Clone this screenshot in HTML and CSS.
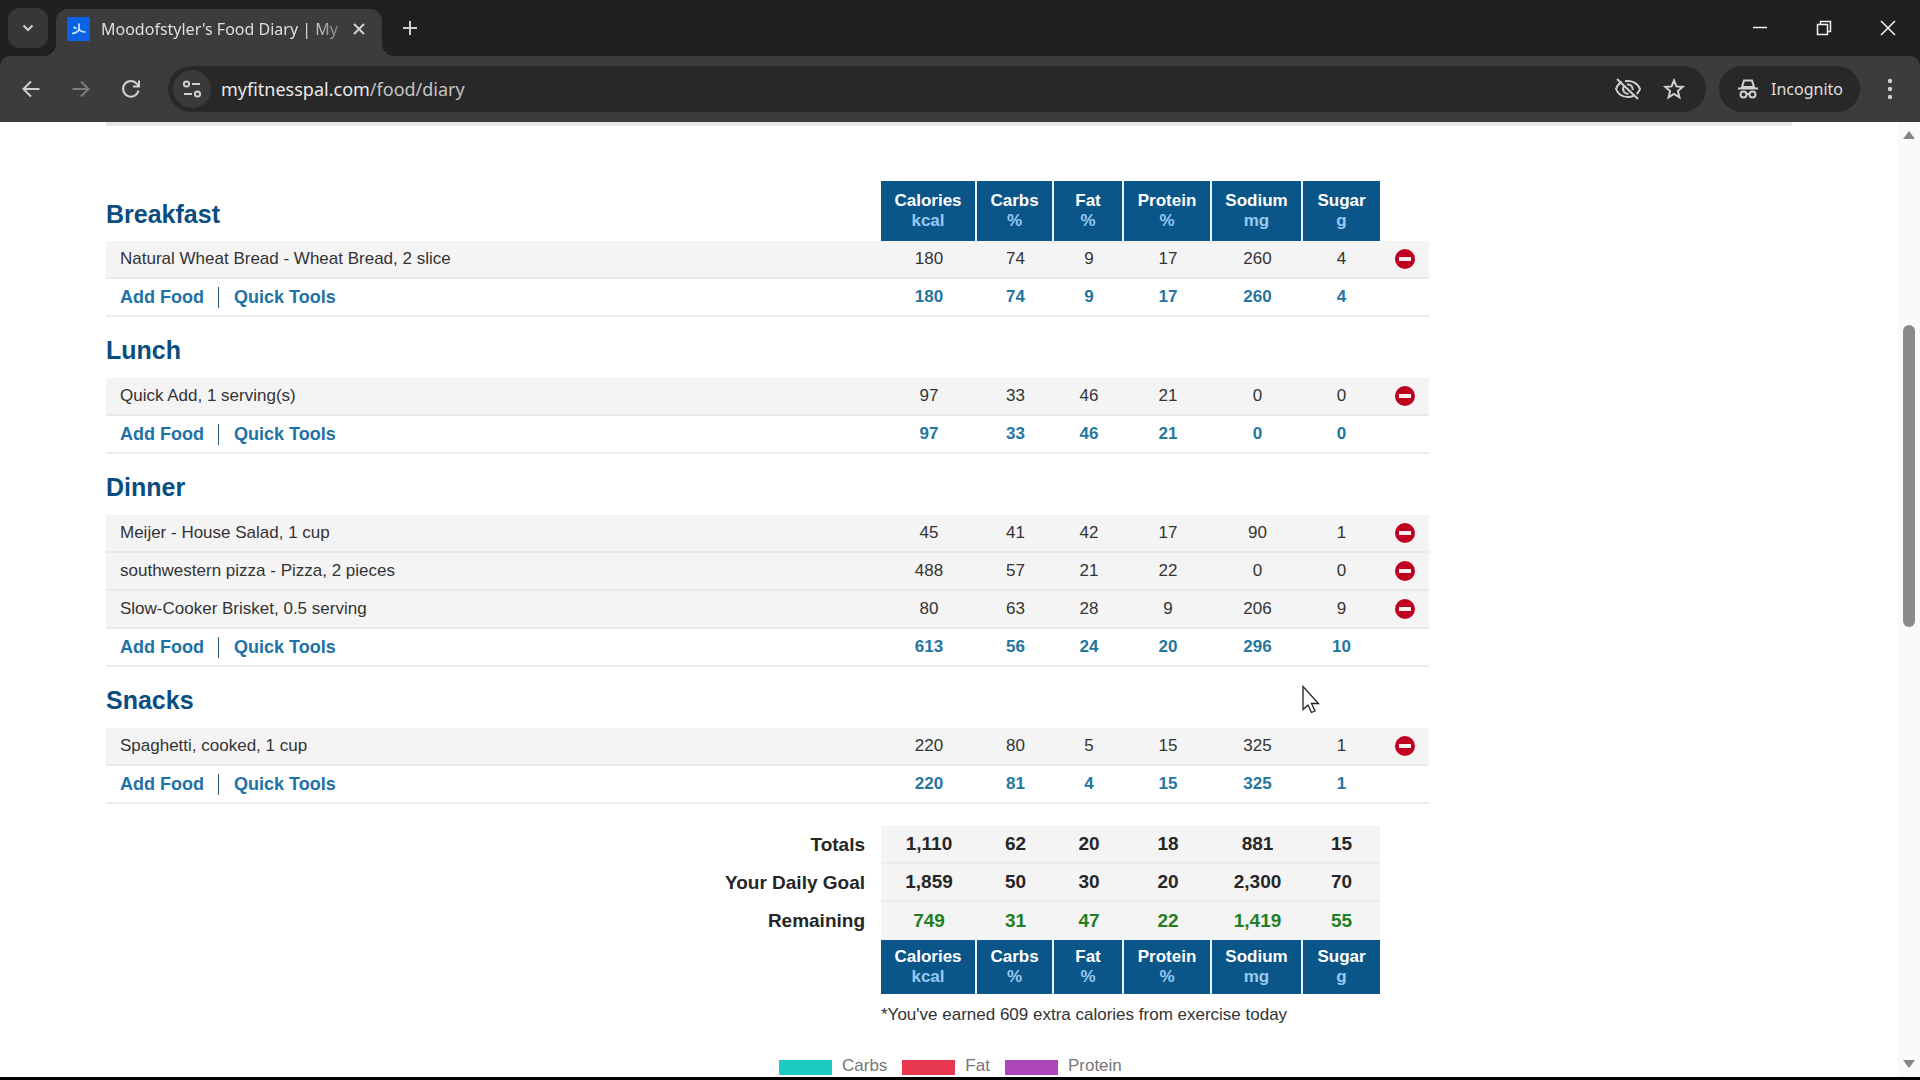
FILE: index.html
```html
<!DOCTYPE html>
<html lang="en">
<head>
<meta charset="utf-8">
<title>Moodofstyler's Food Diary | MyFitnessPal</title>
<link rel="stylesheet" href="styles.css">
</head>
<body>
<header class="browser">
  <div class="tabstrip">
    <button class="tab-search" aria-label="Search tabs"><svg width="14" height="14" viewBox="0 0 14 14"><path d="M2.500 4.500 7 9l4.500-4.500"/></svg></button>
    <div class="tab">
      <svg class="favicon" width="23" height="24" viewBox="0 0 23 24"><rect width="23" height="24" fill="#0b61e4"/><path d="M12 6.500v6M12 12.500q-2 3.500-7 4M12 12.500q2 2.500 6.500 2.500M6.500 10l3 1.500" fill="none" stroke="#c9e6ff" stroke-width="1.700"/></svg>
      <span class="tab-title">Moodofstyler's Food Diary | My</span>
      <button class="tab-close" aria-label="Close tab"><svg width="14" height="14" viewBox="0 0 14 14"><path d="m2 2 10 10M12 2 2 12"/></svg></button>
    </div>
    <button class="new-tab" aria-label="New tab"><svg width="16" height="16" viewBox="0 0 16 16"><path d="M8 1v14M1 8h14"/></svg></button>
    <div class="window-controls">
      <button aria-label="Minimize"><svg width="16" height="16" viewBox="0 0 16 16"><path d="M1 7.500h14"/></svg></button>
      <button aria-label="Restore"><svg width="16" height="16" viewBox="0 0 16 16"><path d="M1.500 4.500h10v10h-10zM4.500 4.500v-3h10v10h-3"/></svg></button>
      <button aria-label="Close"><svg width="16" height="16" viewBox="0 0 16 16"><path d="m1 1 14 14M15 1 1 15"/></svg></button>
    </div>
  </div>
  <div class="toolbar">
    <nav class="nav">
      <button aria-label="Back"><svg width="20" height="20" viewBox="0 0 20 20"><path d="M18.500 10H3M10 2.500 2.500 10l7.500 7.500"/></svg></button>
      <button class="dim" aria-label="Forward"><svg width="20" height="20" viewBox="0 0 20 20"><path d="M1.500 10H17M10 2.500l7.500 7.500-7.500 7.500"/></svg></button>
      <button aria-label="Reload"><svg width="20" height="20" viewBox="0 0 20 20"><path d="M17.500 11.500A7.800 7.800 0 1 1 16 5l1.500 2M18 1.500v6h-6"/></svg></button>
    </nav>
    <div class="omnibox">
      <button class="site-info" aria-label="Site information"><svg width="20" height="20" viewBox="0 0 20 20"><circle cx="4.500" cy="5" r="2.600"/><path d="M10 5h8M2 15h8"/><circle cx="15.500" cy="15" r="2.600"/></svg></button>
      <div class="address"><span class="host">myfitnesspal.com</span>/food/diary</div>
      <button aria-label="Third-party cookies blocked"><svg width="28" height="24" viewBox="0 0 28 24"><path d="M8 5C5 6.500 3 9 2 12c2 5 6.500 8 12 8 2 0 4-.4 5.500-1.200M11 4.300c7-1.300 13 2.200 15 7.700-.7 2-1.800 3.600-3.300 5M9.500 9.500c-1.500 4 1 7.500 5 7.200M13 7.500c3.500-.5 6 2 5.700 5.500M3 2l21 20"/></svg></button>
      <button aria-label="Bookmark this page"><svg width="24" height="24" viewBox="0 0 24 24"><path d="m12 3.500 2.400 5.900 6.300.5-4.800 4.200 1.500 6.200-5.400-3.300-5.400 3.300 1.500-6.200-4.800-4.200 6.300-.5z"/></svg></button>
    </div>
    <button class="incognito"><svg width="22" height="20" viewBox="0 0 22 20"><path d="M5 8 7 1.500h8L17 8z" fill="none"/><path d="M1 9.500h20"/><circle cx="6.500" cy="15.500" r="3"/><circle cx="15.500" cy="15.500" r="3"/><path d="M9.500 15h3"/></svg>Incognito</button>
    <button class="menu" aria-label="Menu"><svg width="6" height="22" viewBox="0 0 6 22"><circle cx="3" cy="3" r="2.200"/><circle cx="3" cy="11" r="2.200"/><circle cx="3" cy="19" r="2.200"/></svg></button>
  </div>
</header>

<div class="viewport">
  <main class="page">
    <div class="panel-edge"></div>
    <table class="diary">
      <colgroup><col><col class="c-cal"><col class="c-carb"><col class="c-fat"><col class="c-pro"><col class="c-sod"><col class="c-sug"><col class="c-del"></colgroup>
      <tbody>
        <tr class="meal"><th scope="row">Breakfast</th><th class="unit">Calories<span>kcal</span></th><th class="unit">Carbs<span>%</span></th><th class="unit">Fat<span>%</span></th><th class="unit">Protein<span>%</span></th><th class="unit">Sodium<span>mg</span></th><th class="unit">Sugar<span>g</span></th><td></td></tr>
        <tr class="food"><td>Natural Wheat Bread - Wheat Bread, 2 slice</td><td>180</td><td>74</td><td>9</td><td>17</td><td>260</td><td>4</td><td><button class="delete" aria-label="Remove"></button></td></tr>
        <tr class="sum"><td><div class="actions"><a href="#">Add Food</a><a href="#">Quick Tools</a></div></td><td>180</td><td>74</td><td>9</td><td>17</td><td>260</td><td>4</td><td></td></tr>
      </tbody>
      <tbody>
        <tr class="meal"><th scope="row" colspan="8">Lunch</th></tr>
        <tr class="food"><td>Quick Add, 1 serving(s)</td><td>97</td><td>33</td><td>46</td><td>21</td><td>0</td><td>0</td><td><button class="delete" aria-label="Remove"></button></td></tr>
        <tr class="sum"><td><div class="actions"><a href="#">Add Food</a><a href="#">Quick Tools</a></div></td><td>97</td><td>33</td><td>46</td><td>21</td><td>0</td><td>0</td><td></td></tr>
      </tbody>
      <tbody>
        <tr class="meal"><th scope="row" colspan="8">Dinner</th></tr>
        <tr class="food"><td>Meijer - House Salad, 1 cup</td><td>45</td><td>41</td><td>42</td><td>17</td><td>90</td><td>1</td><td><button class="delete" aria-label="Remove"></button></td></tr>
        <tr class="food"><td>southwestern pizza - Pizza, 2 pieces</td><td>488</td><td>57</td><td>21</td><td>22</td><td>0</td><td>0</td><td><button class="delete" aria-label="Remove"></button></td></tr>
        <tr class="food"><td>Slow-Cooker Brisket, 0.5 serving</td><td>80</td><td>63</td><td>28</td><td>9</td><td>206</td><td>9</td><td><button class="delete" aria-label="Remove"></button></td></tr>
        <tr class="sum"><td><div class="actions"><a href="#">Add Food</a><a href="#">Quick Tools</a></div></td><td>613</td><td>56</td><td>24</td><td>20</td><td>296</td><td>10</td><td></td></tr>
      </tbody>
      <tbody>
        <tr class="meal"><th scope="row" colspan="8">Snacks</th></tr>
        <tr class="food"><td>Spaghetti, cooked, 1 cup</td><td>220</td><td>80</td><td>5</td><td>15</td><td>325</td><td>1</td><td><button class="delete" aria-label="Remove"></button></td></tr>
        <tr class="sum"><td><div class="actions"><a href="#">Add Food</a><a href="#">Quick Tools</a></div></td><td>220</td><td>81</td><td>4</td><td>15</td><td>325</td><td>1</td><td></td></tr>
      </tbody>
      <tbody>
        <tr class="spacer"><td colspan="8"></td></tr>
        <tr class="total"><th scope="row">Totals</th><td>1,110</td><td>62</td><td>20</td><td>18</td><td>881</td><td>15</td></tr>
        <tr class="total"><th scope="row">Your Daily Goal</th><td>1,859</td><td>50</td><td>30</td><td>20</td><td>2,300</td><td>70</td></tr>
        <tr class="total remaining"><th scope="row">Remaining</th><td>749</td><td>31</td><td>47</td><td>22</td><td>1,419</td><td>55</td></tr>
        <tr class="units"><td></td><th class="unit">Calories<span>kcal</span></th><th class="unit">Carbs<span>%</span></th><th class="unit">Fat<span>%</span></th><th class="unit">Protein<span>%</span></th><th class="unit">Sodium<span>mg</span></th><th class="unit">Sugar<span>g</span></th></tr>
        <tr class="note"><td></td><td colspan="7">*You've earned 609 extra calories from exercise today</td></tr>
      </tbody>
    </table>
    <ul class="legend">
      <li><i class="carbs"></i>Carbs</li>
      <li><i class="fat"></i>Fat</li>
      <li><i class="protein"></i>Protein</li>
    </ul>
  </main>
  <div class="scrollbar">
    <svg width="12" height="8" viewBox="0 0 12 8"><path d="M0 8 6 0l6 8z"/></svg>
    <div class="track"><div class="thumb"></div></div>
    <svg width="12" height="8" viewBox="0 0 12 8"><path d="m0 0 6 8 6-8z"/></svg>
  </div>
</div>
<svg class="pointer" width="20" height="30" viewBox="0 0 20 30"><path d="M2 1.500v23l5-4.500 3.500 7.500 3.500-1.500-3.500-7.500h7z" fill="#fff" stroke="#222" stroke-width="1.300"/></svg>
</body>
</html>
```
FILE: styles.css
```css
* { box-sizing: border-box; }

body {
  margin: 0;
  height: 100vh;
  display: flex;
  flex-direction: column;
  overflow: hidden;
  background: #fff;
  border-bottom: 3px solid #000;
  font-family: "Liberation Sans", Arial, sans-serif;
  font-size: 17px;
  color: #333;
}

button {
  border: 0;
  padding: 0;
  background: none;
  color: inherit;
  font: inherit;
  display: flex;
  align-items: center;
  justify-content: center;
  flex: none;
}

/* Browser frame */
.browser {
  flex: none;
  background: #202020;
  color: #dedede;
  font-family: "Noto Sans", "Open Sans", sans-serif;
}
.browser svg { flex: none; }
.browser button svg {
  fill: none;
  stroke: #d0d0d0;
  stroke-width: 2;
}
.tabstrip {
  height: 56px;
  display: flex;
  align-items: center;
  padding-left: 8px;
}
.tab-search {
  width: 40px;
  height: 40px;
  border-radius: 12px;
  background: #373737;
}
.tab {
  position: relative;
  align-self: flex-end;
  width: 326px;
  height: 47px;
  margin-left: 8px;
  padding: 0 16px 8px 11px;
  display: flex;
  align-items: center;
  border-radius: 12px 12px 0 0;
  background: #3c3c3c;
}
.tab::before,
.tab::after {
  content: "";
  position: absolute;
  bottom: 0;
  width: 12px;
  height: 12px;
}
.tab::before {
  right: 100%;
  background: radial-gradient(circle at 0 0, transparent 12px, #3c3c3c 12px);
}
.tab::after {
  left: 100%;
  background: radial-gradient(circle at 100% 0, transparent 12px, #3c3c3c 12px);
}
.tab-title {
  flex: 1;
  margin: 0 6px 0 11px;
  white-space: nowrap;
  font-size: 16px;
  line-height: 24px;
  -webkit-mask-image: linear-gradient(to right, #000 84%, rgba(0, 0, 0, .3));
  mask-image: linear-gradient(to right, #000 84%, rgba(0, 0, 0, .3));
}
.new-tab { width: 32px; height: 32px; margin-left: 12px; }
.window-controls { margin-left: auto; display: flex; }
.window-controls button { width: 64px; height: 56px; }
.browser .window-controls svg { stroke: #f0f0f0; stroke-width: 1.5; }

.toolbar {
  height: 66px;
  display: flex;
  align-items: center;
  background: #3c3c3c;
  border-radius: 10px 10px 0 0;
}
.nav { display: flex; padding-left: 6px; }
.nav button { width: 50px; height: 40px; }
.browser .dim svg { stroke: #7c7c7c; }
.omnibox {
  flex: 1;
  height: 46px;
  margin-left: 12px;
  padding: 0 20px 0 5px;
  display: flex;
  align-items: center;
  gap: 20px;
  border-radius: 23px;
  background: #282828;
}
.site-info {
  width: 38px;
  height: 38px;
  border-radius: 50%;
  background: #3a3a3a;
}
.address {
  flex: 1;
  margin-left: -10px;
  font-size: 18px;
  line-height: 26px;
  color: #c4c4c4;
}
.host { color: #e8e8e8; }
.incognito {
  height: 46px;
  margin-left: 13px;
  padding: 0 17px 0 18px;
  gap: 12px;
  border-radius: 23px;
  background: #282828;
  font-size: 16px;
}
.menu { width: 60px; height: 40px; }
.browser .menu svg { fill: #d0d0d0; stroke: none; }

/* Page */
.viewport { flex: 1; min-height: 0; display: flex; }
.page { flex: 1; min-width: 0; overflow: hidden; padding-left: 106px; }
.panel-edge {
  height: 4px;
  margin: 0 106px 55px 0;
  background: #e6e4e5;
}

.diary {
  width: 100%;
  max-width: 1323px;
  table-layout: fixed;
  border-collapse: separate;
  border-spacing: 0;
  text-align: center;
}
.c-cal { width: 96px; }
.c-carb, .c-sug { width: 77px; }
.c-fat { width: 70px; }
.c-pro { width: 88px; }
.c-sod { width: 91px; }
.c-del { width: 49px; }
.diary td, .diary th { padding: 0; }

.meal { height: 60px; }
.meal th[scope] {
  padding-top: 6px;
  text-align: left;
  font-size: 25px;
  color: #0a4d80;
}
tbody + tbody .meal { height: 61px; }
.diary .unit {
  border-right: 2px solid #e8f4ff;
  background: #0b5688;
  color: #fff;
  font-size: 17px;
  line-height: 20px;
}
.diary .unit:nth-child(7) { border-right: 0; }
.unit span { display: block; color: #98c9f2; }

.food { height: 38px; }
.food td { background: #f5f4f5; border-bottom: 2px solid #e9e9ea; }
.diary .food td:first-child,
.diary .sum td:first-child { padding-left: 14px; text-align: left; }
.sum { height: 38px; font-weight: bold; color: #24769f; }
.sum td { border-bottom: 2px solid #ececec; }
.actions { display: flex; font-size: 18px; line-height: 21px; }
.actions a { color: #1e72a8; text-decoration: none; }
.actions a + a { margin-left: 14px; padding-left: 15px; border-left: 1px solid #2a5876; }

.delete {
  width: 20px;
  height: 20px;
  margin: 0 auto;
  border-radius: 50%;
  background: #c00020;
}
.delete::before { content: ""; width: 12px; height: 4px; background: #fff0f0; }

.spacer { height: 22px; }
.total { height: 38px; font-size: 19px; font-weight: bold; color: #262626; }
.diary .total th { padding-right: 16px; text-align: right; }
.total td { background: #f5f4f5; border-bottom: 2px solid #ebebeb; }
.remaining td { border-bottom: 0; color: #1f8023; }
.units { height: 54px; }
.note { height: 42px; text-align: left; }

.legend {
  width: 100%;
  max-width: 1323px;
  margin: 20px 0 0;
  padding: 0 0 0 673px;
  display: flex;
  gap: 15px;
  list-style: none;
  line-height: 20px;
  color: #777;
}
.legend li { display: flex; align-items: center; gap: 10px; }
.legend i { width: 53px; height: 15px; margin-top: 2px; }
.carbs { background: #1bcbc4; }
.fat { background: #e8384f; }
.protein { background: #ad46ba; }

.scrollbar {
  flex: none;
  width: 22px;
  padding: 9px 0;
  display: flex;
  flex-direction: column;
  align-items: center;
  background: #fafafa;
  fill: #858585;
}
.track { flex: 1; width: 12px; padding-top: 186px; }
.thumb { height: 34%; min-height: 302px; border-radius: 6px; background: #8a8a8a; }

.pointer { position: absolute; left: 1301px; top: 685px; }
```
